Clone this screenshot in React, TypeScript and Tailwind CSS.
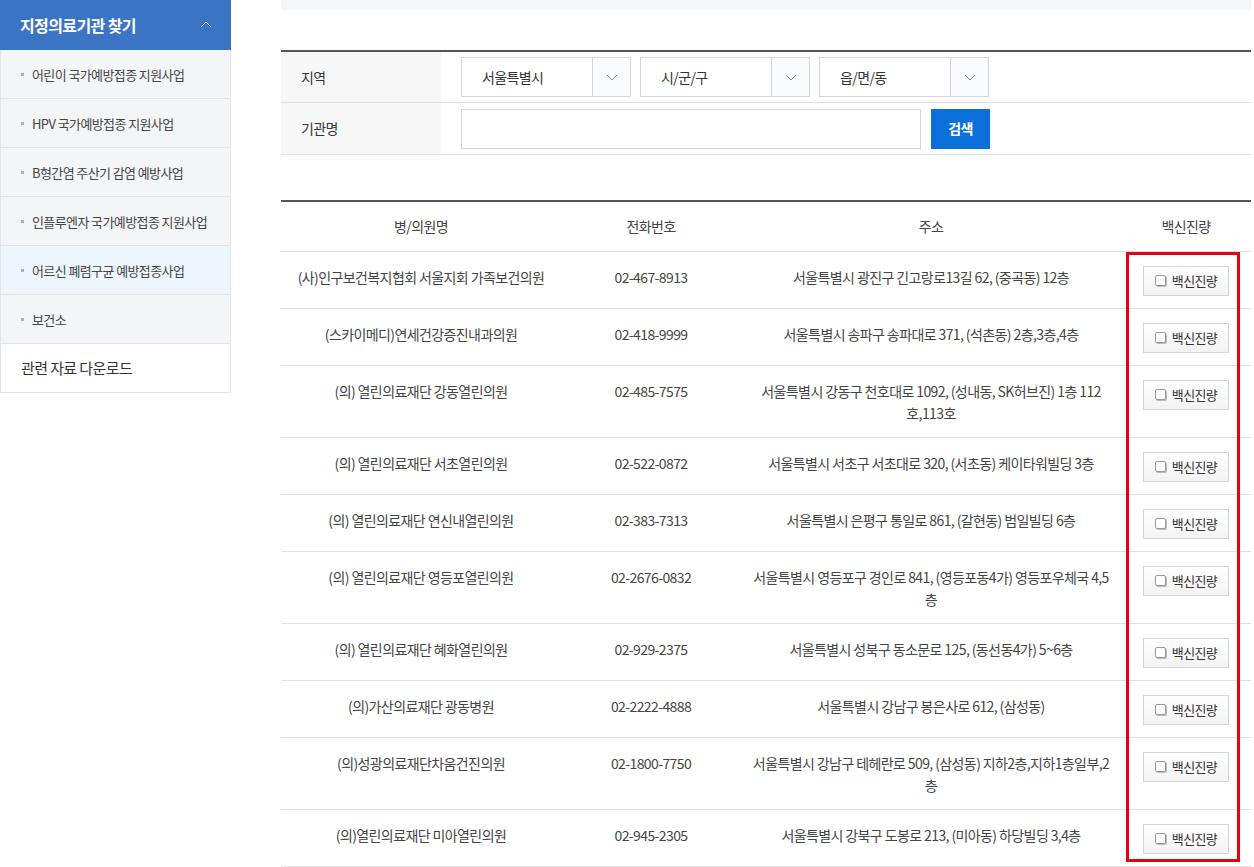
const font = { fontFamily: '"Noto Sans CJK KR", "Noto Sans", sans-serif' }

const menu = [
  '어린이 국가예방접종 지원사업',
  'HPV 국가예방접종 지원사업',
  'B형간염 주산기 감염 예방사업',
  '인플루엔자 국가예방접종 지원사업',
  '어르신 폐렴구균 예방접종사업',
  '보건소',
]

const rows: { name: string; tel: string; addr: string[] }[] = [
  { name: '(사)인구보건복지협회 서울지회 가족보건의원', tel: '02-467-8913', addr: ['서울특별시 광진구 긴고랑로13길 62, (중곡동) 12층'] },
  { name: '(스카이메디)연세건강증진내과의원', tel: '02-418-9999', addr: ['서울특별시 송파구 송파대로 371, (석촌동) 2층,3층,4층'] },
  { name: '(의) 열린의료재단 강동열린의원', tel: '02-485-7575', addr: ['서울특별시 강동구 천호대로 1092, (성내동, SK허브진) 1층 112', '호,113호'] },
  { name: '(의) 열린의료재단 서초열린의원', tel: '02-522-0872', addr: ['서울특별시 서초구 서초대로 320, (서초동) 케이타워빌딩 3층'] },
  { name: '(의) 열린의료재단 연신내열린의원', tel: '02-383-7313', addr: ['서울특별시 은평구 통일로 861, (갈현동) 범일빌딩 6층'] },
  { name: '(의) 열린의료재단 영등포열린의원', tel: '02-2676-0832', addr: ['서울특별시 영등포구 경인로 841, (영등포동4가) 영등포우체국 4,5', '층'] },
  { name: '(의) 열린의료재단 혜화열린의원', tel: '02-929-2375', addr: ['서울특별시 성북구 동소문로 125, (동선동4가) 5~6층'] },
  { name: '(의)가산의료재단 광동병원', tel: '02-2222-4888', addr: ['서울특별시 강남구 봉은사로 612, (삼성동)'] },
  { name: '(의)성광의료재단차움건진의원', tel: '02-1800-7750', addr: ['서울특별시 강남구 테헤란로 509, (삼성동) 지하2층,지하1층일부,2', '층'] },
  { name: '(의)열린의료재단 미아열린의원', tel: '02-945-2305', addr: ['서울특별시 강북구 도봉로 213, (미아동) 하당빌딩 3,4층'] },
]

function Chevron({ up = false, className = '' }: { up?: boolean; className?: string }) {
  return (
    <svg width="12" height="7" viewBox="0 0 12 7" className={className}>
      <polyline
        points={up ? '1,6 6,1 11,6' : '1,1 6,6 11,1'}
        fill="none"
        stroke="currentColor"
        strokeWidth="1"
      />
    </svg>
  )
}

function Select({ value }: { value: string }) {
  return (
    <div className="flex h-[40px] w-[170px] border border-[#d6d6d6] bg-white">
      <span className="flex flex-1 items-center pl-[20px] text-[14px] text-[#333]">{value}</span>
      <span className="flex w-[38px] items-center justify-center border-l border-[#d6d6d6] bg-[#fafbfc] text-[#888]">
        <Chevron />
      </span>
    </div>
  )
}

function VaccineButton() {
  return (
    <button className="inline-flex h-[30px] w-[86px] items-center justify-center gap-[6px] border border-[#d4d4d4] bg-gradient-to-b from-white to-[#f3f3f3] text-[13px] text-[#333]">
      <span className="inline-block h-[11px] w-[11px] rounded-[2px] border border-[#9a9a9a] bg-white shadow-[1px_1px_0_#bbb]" />
      백신진량
    </button>
  )
}

export default function App() {
  return (
    <div className="flex min-h-[867px] bg-white tracking-[-0.6px] text-[#333]" style={font}>
      <aside className="w-[231px] shrink-0">
        <div className="flex h-[50px] items-center justify-between bg-[#3c74c5] pl-[20px] pr-[19px] text-[16px] font-bold text-white">
          지정의료기관 찾기
          <Chevron up className="mb-[2px]" />
        </div>
        {menu.map((m, i) => (
          <div
            key={m}
            className={`flex h-[49px] items-center border-x border-b border-[#e2e4e7] pl-[20px] pt-[1px] text-[13px] text-[#444] ${
              i === 4 ? 'bg-[#eef6fd]' : 'bg-[#f4f5f7]'
            }`}
          >
            <span className="mr-[8px] h-[3px] w-[3px] bg-[#b0b0b0]" />
            {m}
          </div>
        ))}
        <div className="flex h-[49px] items-center border-x border-b border-[#e2e4e7] bg-white pl-[20px] pt-[1px] text-[15px] text-[#333]">
          관련 자료 다운로드
        </div>
      </aside>

      <main className="ml-[50px] w-[970px]">
        <div className="h-[10px] bg-[#f5f6f8]" />

        <div className="mt-[40px] border-t-2 border-[#555]">
          <div className="flex h-[51px] border-b border-[#e0e0e0]">
            <div className="flex w-[160px] items-center bg-[#f7f7f7] pl-[20px] text-[14px]">지역</div>
            <div className="flex items-center gap-[9px] pl-[20px]">
              <Select value="서울특별시" />
              <Select value="시/군/구" />
              <Select value="읍/면/동" />
            </div>
          </div>
          <div className="flex h-[52px] border-b border-[#e0e0e0]">
            <div className="flex w-[160px] items-center bg-[#f7f7f7] pl-[20px] text-[14px]">기관명</div>
            <div className="flex items-center gap-[10px] pl-[20px]">
              <input className="h-[40px] w-[460px] border border-[#d6d6d6] bg-white outline-none" />
              <button className="h-[40px] w-[59px] bg-[#0b6fdc] text-[14px] font-bold text-white">검색</button>
            </div>
          </div>
        </div>

        <div className="relative mt-[45px]">
          <table className="w-full border-collapse border-t-2 border-[#555] text-center text-[14px] text-[#444]">
            <colgroup>
              <col className="w-[280px]" />
              <col className="w-[180px]" />
              <col className="w-[380px]" />
              <col className="w-[130px]" />
            </colgroup>
            <thead>
              <tr className="h-[50px] border-b border-[#e0e0e0] text-[#444]">
                <th className="font-normal">병/의원명</th>
                <th className="font-normal">전화번호</th>
                <th className="font-normal">주소</th>
                <th className="font-normal">백신진량</th>
              </tr>
            </thead>
            <tbody>
              {rows.map((r) => (
                <tr key={r.tel} className="border-b border-[#e0e0e0] leading-[22px]">
                  <td className="px-[10px] pb-[13px] pt-[14px] align-top">{r.name}</td>
                  <td className="pb-[13px] pt-[14px] align-top">{r.tel}</td>
                  <td className="px-[10px] pb-[13px] pt-[14px] align-top">
                    {r.addr.map((l) => (
                      <div key={l} className="whitespace-nowrap">{l}</div>
                    ))}
                  </td>
                  <td className="pb-[12px] pt-[14px] align-top">
                    <VaccineButton />
                  </td>
                </tr>
              ))}
            </tbody>
          </table>
          <div className="pointer-events-none absolute left-[845px] top-[52px] h-[610px] w-[114px] border-[3px] border-[#e60012]" />
        </div>
      </main>
    </div>
  )
}
